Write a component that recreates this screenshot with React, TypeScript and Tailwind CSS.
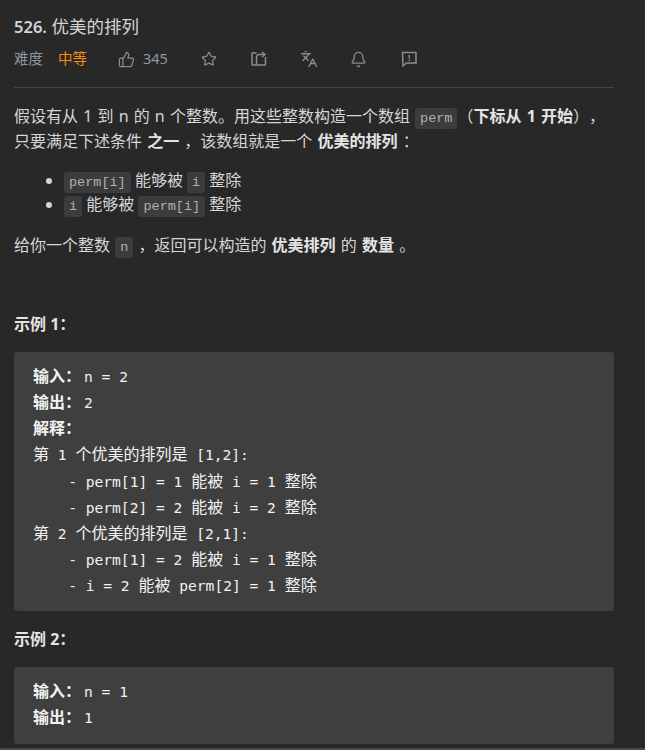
import React from 'react';
import { Bell, Languages, Star, ThumbsUp } from 'lucide-react';

const cjk = "font-['Noto_Sans','Noto_Sans_CJK_SC',sans-serif]";

function Code({ children }: { children: React.ReactNode }) {
  return (
    <code className="inline-block h-[21px] rounded-[3px] bg-[#3c3c3c] px-[5px] font-['Liberation_Mono',monospace] text-[13.5px] leading-[22px] text-[#b0b0b0] align-[0px]">
      {children}
    </code>
  );
}

function B({ children }: { children: React.ReactNode }) {
  return <strong className="font-bold text-[#e4e4e4]">{children}</strong>;
}

function M({ children }: { children: React.ReactNode }) {
  return <span className="font-['DejaVu_Sans_Mono',monospace] text-[14.6px]">{children}</span>;
}

// value after a bold label like 输入：
function Val({ children }: { children: React.ReactNode }) {
  return <span className="ml-[3px] font-['DejaVu_Sans_Mono',monospace] text-[14.6px]">{children}</span>;
}

function Line({ children }: { children: React.ReactNode }) {
  return <div className="h-[26.125px] overflow-hidden leading-[26px]">{children}</div>;
}

function Pre({ children, className }: { children: React.ReactNode; className: string }) {
  return (
    <div className={`mt-[15px] rounded-[3px] bg-[#3f3f3f] px-[19px] pt-[11px] text-[16px] whitespace-pre text-[#f2f2f2] ${cjk} ${className}`}>
      {children}
    </div>
  );
}

function ShareIcon() {
  return (
    <svg width="16" height="16" viewBox="0 0 16 16" fill="none" stroke="#8c8c8c" strokeWidth="1.5">
      <path d="M5.5 2H1.5a.5.5 0 0 0-.5.5v11a.5.5 0 0 0 .5.5h12.5a.5.5 0 0 0 .5-.5V6" />
      <path d="M5.5 14V6a2.5 2.5 0 0 1 2.5-2.5h5.5" />
      <path d="M11 1l3 2.5-3 2.5" />
    </svg>
  );
}

function FeedbackIcon() {
  return (
    <svg width="16" height="16" viewBox="0 0 16 16" fill="none" stroke="#8c8c8c" strokeWidth="1.5">
      <path d="M1.5 1.5h13.5v10.5H5.5L2 14.800z" />
      <path d="M8.2 4v3.500M8.2 8.800v1.200" />
    </svg>
  );
}

function IconCell({ children }: { children: React.ReactNode }) {
  return <span className="flex w-[50px] justify-center">{children}</span>;
}

export default function App() {
  return (
    <div className={`h-[750px] w-[645px] overflow-hidden border-b-2 border-[#4a4a4a] bg-[#282828] pl-[14px] pr-[31px] [text-spacing-trim:space-all] ${cjk}`}>
      <h1 className="h-[39px] pt-[13px] text-[17.5px] leading-[26px] text-[#d4d4d4]">
        <span className="text-[16.5px] font-semibold">526.</span> 优美的排列
      </h1>
      <div className="mt-[9px] flex h-[22px] items-center text-[14.5px] text-[#8d98a3]">
        <span className="w-[44px]">难度</span>
        <span className="w-[60px] text-[#f58a0c]">中等</span>
        <ThumbsUp size={17} color="#8c8c8c" strokeWidth={1.8} />
        <span className="ml-[8px] w-[40.5px]">345</span>
        <IconCell><Star size={16} color="#8c8c8c" strokeWidth={1.8} /></IconCell>
        <IconCell><ShareIcon /></IconCell>
        <IconCell><Languages size={18} color="#8c8c8c" strokeWidth={1.8} /></IconCell>
        <IconCell><Bell size={17} color="#8c8c8c" strokeWidth={1.8} /></IconCell>
        <IconCell><FeedbackIcon /></IconCell>
      </div>
      <div className="mt-[17px] h-px bg-[#444444]" />

      <div className="mt-[16px] text-[16px] leading-[25px] text-[#d6d6d6] [word-spacing:1px]">
        <p className="h-[25px]">假设有从 1 到 n 的 n 个整数。用这些整数构造一个数组 <Code>perm</Code>（<B>下标从 1 开始</B>），</p>
        <p className="h-[25px]">只要满足下述条件 <B>之一</B> ，该数组就是一个 <B>优美的排列</B> ：</p>
      </div>

      <ul className="mt-[14px] list-disc pl-[50px] text-[16px] leading-[24px] text-[#d6d6d6]">
        <li className="h-[24px]"><Code>perm[i]</Code> 能够被 <Code>i</Code> 整除</li>
        <li className="h-[24px]"><Code>i</Code> 能够被 <Code>perm[i]</Code> 整除</li>
      </ul>

      <p className="mt-[17px] h-[25px] text-[16px] leading-[25px] text-[#d6d6d6] [word-spacing:1px]">
        给你一个整数 <Code>n</Code> ，返回可以构造的 <B>优美排列</B> 的 <B>数量</B> 。
      </p>

      <p className="mt-[54px] h-[25px] text-[16px] leading-[25px] text-[#d6d6d6]"><B>示例 1：</B></p>
      <Pre className="pb-[13px]">
        <Line><b>输入：</b><Val>n = 2</Val></Line>
        <Line><b>输出：</b><Val>2</Val></Line>
        <Line><b>解释：</b></Line>
        <Line>第<M> 1 </M>个优美的排列是<M> [1,2]:</M></Line>
        <Line><M>    - perm[1] = 1 </M>能被<M> i = 1 </M>整除</Line>
        <Line><M>    - perm[2] = 2 </M>能被<M> i = 2 </M>整除</Line>
        <Line>第<M> 2 </M>个优美的排列是<M> [2,1]:</M></Line>
        <Line><M>    - perm[1] = 2 </M>能被<M> i = 1 </M>整除</Line>
        <Line><M>    - i = 2 </M>能被<M> perm[2] = 1 </M>整除</Line>
      </Pre>

      <p className="mt-[16px] h-[25px] text-[16px] leading-[25px] text-[#d6d6d6]"><B>示例 2：</B></p>
      <Pre className="pb-[14px]">
        <Line><b>输入：</b><Val>n = 1</Val></Line>
        <Line><b>输出：</b><Val>1</Val></Line>
      </Pre>
    </div>
  );
}
